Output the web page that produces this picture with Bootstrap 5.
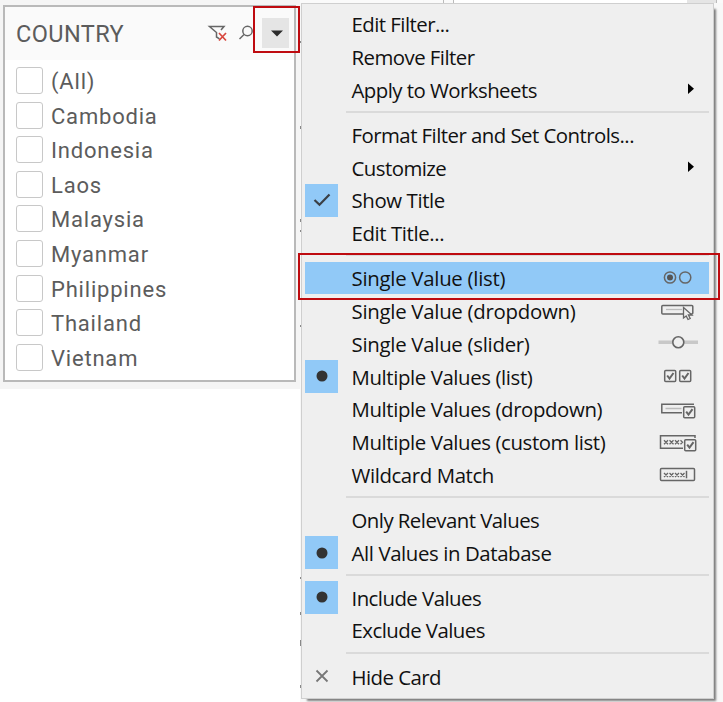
<!DOCTYPE html>
<html lang="en">
<head>
<meta charset="utf-8">
<title>Country filter</title>
<meta name="viewport" content="width=device-width, initial-scale=1">
<link href="https://cdn.jsdelivr.net/npm/bootstrap@5.3.0/dist/css/bootstrap.min.css" rel="stylesheet">
<style>
body{background:#fff;overflow:hidden}
.stage{width:723px;height:702px;background:linear-gradient(#f8f8f8,#f8f8f8) 300px 0/423px 702px no-repeat,#fff}
.side{width:300px;height:389px;background:#f5f5f5;padding:5px 0 0 3px}
.filter-card{width:293px;height:377px;border:2px solid #b9b9b9;border-radius:0;background:#fff;font-family:Roboto,sans-serif;color:#5c5c5c}
.filter-head{height:53px;background:#fafafa;padding-left:11px;font-size:23.5px;letter-spacing:.4px;flex:none}
.head-title{padding-top:2px}
.head-tools{width:84px;height:52px;margin-right:5px}
.filter-list{padding:7px 0 0 11px;font-size:22px}
.filter-row{height:34.6px;gap:8px;letter-spacing:.8px;line-height:29px}
.filter-row .form-check-input{width:27px;height:27px;margin:0;border:1.5px solid #c8c8c8;border-radius:3px;flex:none;background:#fff}
.edge{width:1px;height:702px;flex:none}
.ctx{display:block;position:static;width:413px;height:696px;margin-top:3px;padding:3.6px 4px 0 3px;border:1.5px solid #cfcfcf;border-radius:0;background:#efefef;box-shadow:4px 4px 2px -2px #7d7d7d;font-family:"Open Sans","Noto Sans",sans-serif}
.ctx .dropdown-item{height:32.8px;padding:0;font-size:20.4px;color:#111;line-height:33px;display:flex;align-items:stretch;background:none}
.ctx .dropdown-item.picked{background:#91c9f7}
.ctx .dropdown-item.last-item{padding-top:2px}
.mark-cell{width:33px;margin-right:13.5px;flex:none;display:flex;align-items:center;justify-content:center}
.mark-cell.on{background:#91c9f7}
.label{flex:1;letter-spacing:-.54px;padding-top:.6px;display:block}
.label.loose{letter-spacing:-.28px}
.label.relaxed{letter-spacing:-.4px}
.end-icon{width:52px;height:33px;flex:none}
.ctx .dropdown-divider{height:12.2px;margin:0 0 0 41px;border:0;opacity:1;background:linear-gradient(#dadada,#dadada) 0 5px/100% 2px no-repeat}
.callout{position:absolute;z-index:1100;border:2px solid #be0a0f;pointer-events:none}
.callout-arrow{left:253px;top:6px;width:47px;height:47px}
.callout-item{left:298px;top:253px;width:422px;height:47px}
.top-strip{position:absolute;left:300px;top:0;width:423px;height:3px}
svg{display:block}
</style>
</head>
<body>
<main class="stage position-relative d-flex align-items-start overflow-hidden">
  <svg class="top-strip" viewBox="0 0 423 3"><path fill="#fafafa" d="M0 0h423v3H0z"/><path fill="#fff" d="M154 0h233v3H154z"/><path fill="#e5e5e5" d="M387 0h29v3h-29z"/><path fill="#bbb" d="M143 0h1v3h-1zM153 0h1v3h-1zM416 0h1v3h-1z"/></svg>
  <aside class="side flex-shrink-0">
    <section class="card filter-card">
      <header class="filter-head d-flex align-items-center justify-content-between">
        <span class="head-title">COUNTRY</span>
        <svg class="head-tools" viewBox="205 7 84 52">
          <g fill="none" stroke="#666" stroke-width="1.5"><path d="M219.500 37.800l-3-1.800v-4.500l-7-6h14.500l-3 3.500"/><circle cx="247.500" cy="30" r="4.700"/><path d="M244 33.500l-4.500 4.500"/></g>
          <path d="M219 32l7 7.500m0-7.500l-7 7.500" stroke="#d8473e" stroke-width="1.700"/>
          <path fill="#fafafa" d="M253 10h9v40h-9z"/><path fill="#e5e5e5" d="M262 17h30v30h-30z"/><path fill="#2b2b2b" d="M271 29.500h12l-6 6z"/>
        </svg>
      </header>
      <div class="filter-list">
        <label class="filter-row d-flex"><input class="form-check-input" type="checkbox"><span>(All)</span></label>
        <label class="filter-row d-flex"><input class="form-check-input" type="checkbox"><span>Cambodia</span></label>
        <label class="filter-row d-flex"><input class="form-check-input" type="checkbox"><span>Indonesia</span></label>
        <label class="filter-row d-flex"><input class="form-check-input" type="checkbox"><span>Laos</span></label>
        <label class="filter-row d-flex"><input class="form-check-input" type="checkbox"><span>Malaysia</span></label>
        <label class="filter-row d-flex"><input class="form-check-input" type="checkbox"><span>Myanmar</span></label>
        <label class="filter-row d-flex"><input class="form-check-input" type="checkbox"><span>Philippines</span></label>
        <label class="filter-row d-flex"><input class="form-check-input" type="checkbox"><span>Thailand</span></label>
        <label class="filter-row d-flex"><input class="form-check-input" type="checkbox"><span>Vietnam</span></label>
      </div>
    </section>
  </aside>
  <svg class="edge" viewBox="0 0 1 702"><path fill="#888" d="M0 41h1v2H0zM0 126h1v3H0zM0 219h1v3H0zM0 230h1v2H0zM0 325h1v2H0zM0 577h1v2H0zM0 612h1v3H0zM0 640h1v6H0zM0 685h1v3H0z"/></svg>
  <div class="dropdown-menu show ctx flex-shrink-0">
    <a class="dropdown-item"><span class="mark-cell"></span><span class="label">Edit Filter...</span></a>
    <a class="dropdown-item"><span class="mark-cell"></span><span class="label">Remove Filter</span></a>
    <a class="dropdown-item"><span class="mark-cell"></span><span class="label">Apply to Worksheets</span><svg class="end-icon" viewBox="0 0 52 33"><path d="M31 10.500l6 5.200-6 5.200z"/></svg></a>
    <hr class="dropdown-divider">
    <a class="dropdown-item"><span class="mark-cell"></span><span class="label">Format Filter and Set Controls...</span></a>
    <a class="dropdown-item"><span class="mark-cell"></span><span class="label">Customize</span><svg class="end-icon" viewBox="0 0 52 33"><path d="M31 10.500l6 5.200-6 5.200z"/></svg></a>
    <a class="dropdown-item"><span class="mark-cell on"><svg width="20" height="16" viewBox="0 0 20 16"><path d="M2.500 8l5 4.800L17.500 2.500" fill="none" stroke="#3a3f45" stroke-width="2.200"/></svg></span><span class="label relaxed">Show Title</span></a>
    <a class="dropdown-item"><span class="mark-cell"></span><span class="label relaxed">Edit Title...</span></a>
    <hr class="dropdown-divider">
    <a class="dropdown-item picked"><span class="mark-cell"></span><span class="label loose">Single Value (list)</span><svg class="end-icon" viewBox="657 262 52 33"><g fill="none" stroke="#666" stroke-width="1.500"><circle cx="670" cy="277.500" r="5.600"/><circle cx="685.200" cy="277.500" r="5.600"/></g><circle cx="670" cy="277.500" r="3" fill="#555"/></svg></a>
    <a class="dropdown-item"><span class="mark-cell"></span><span class="label loose">Single Value (dropdown)</span><svg class="end-icon" viewBox="657 295 52 33"><rect x="661.800" y="306.500" width="31" height="8.500" rx="1" fill="none" stroke="#666" stroke-width="1.500"/><path d="M666 310.500h16" stroke="#bbb" stroke-width="1.300"/><path d="M683.500 308.500v10.500l2.700-2 1.800 3.500 2.200-1-1.800-3.500h3.600z" fill="#efefef" stroke="#666" stroke-width="1.300"/></svg></a>
    <a class="dropdown-item"><span class="mark-cell"></span><span class="label loose">Single Value (slider)</span><svg class="end-icon" viewBox="657 327.500 52 33"><path d="M658.500 342.800h39.500" stroke="#c8c8c8" stroke-width="3.500"/><circle cx="678.300" cy="342.800" r="5.500" fill="#efefef" stroke="#666" stroke-width="1.600"/></svg></a>
    <a class="dropdown-item"><span class="mark-cell on"><svg width="12" height="12"><circle cx="6" cy="6" r="5.500" fill="#333"/></svg></span><span class="label relaxed">Multiple Values (list)</span><svg class="end-icon" viewBox="657 360 52 33"><g fill="none" stroke="#666" stroke-width="1.500"><rect x="664.700" y="370.500" width="11" height="11" rx="1"/><rect x="679.700" y="370.500" width="11" height="11" rx="1"/><path stroke-width="2" d="M667.200 375.500l2.300 3 4-5.500M682.200 375.500l2.300 3 4-5.500"/></g></svg></a>
    <a class="dropdown-item"><span class="mark-cell"></span><span class="label relaxed">Multiple Values (dropdown)</span><svg class="end-icon" viewBox="657 393 52 33"><g fill="none" stroke="#666" stroke-width="1.500"><path d="M694 404.200h-32.200v8.500H682"/><path d="M665.500 408.500h16" stroke="#bbb"/><rect x="683.700" y="406.700" width="11" height="11" rx="1"/><path stroke-width="2" d="M686.200 411.700l2.300 3 4-5.500"/></g></svg></a>
    <a class="dropdown-item"><span class="mark-cell"></span><span class="label relaxed">Multiple Values (custom list)</span><svg class="end-icon" viewBox="657 426 52 33"><g fill="none" stroke="#666" stroke-width="1.500"><path d="M695 438v-2.200h-34.500v12.500H683"/><path stroke-width="1.300" d="M664 440.200l4 4m0-4l-4 4m5.500-4l4 4m0-4l-4 4m5.500-4l4 4m0-4l-4 4m5.500-4l2 2-2 2"/><rect x="684.700" y="439.700" width="11" height="11" rx="1"/><path stroke-width="2" d="M687.200 444.700l2.300 3 4-5.500"/></g></svg></a>
    <a class="dropdown-item"><span class="mark-cell"></span><span class="label relaxed">Wildcard Match</span><svg class="end-icon" viewBox="657 458.200 52 33"><g fill="none" stroke="#666" stroke-width="1.500"><rect x="660.500" y="468.700" width="34" height="12" rx="1"/><path stroke-width="1.300" d="M664 473.200l4 4m0-4l-4 4m5.500-4l4 4m0-4l-4 4m5.500-4l4 4m0-4l-4 4m5.500-4l4 4m0-4l-4 4"/><path d="M686.500 471v7.500"/></g></svg></a>
    <hr class="dropdown-divider">
    <a class="dropdown-item"><span class="mark-cell"></span><span class="label">Only Relevant Values</span></a>
    <a class="dropdown-item"><span class="mark-cell on"><svg width="12" height="12"><circle cx="6" cy="6" r="5.500" fill="#333"/></svg></span><span class="label relaxed">All Values in Database</span></a>
    <hr class="dropdown-divider">
    <a class="dropdown-item"><span class="mark-cell on"><svg width="12" height="12"><circle cx="6" cy="6" r="5.500" fill="#333"/></svg></span><span class="label">Include Values</span></a>
    <a class="dropdown-item"><span class="mark-cell"></span><span class="label">Exclude Values</span></a>
    <hr class="dropdown-divider">
    <a class="dropdown-item last-item"><span class="mark-cell"><svg width="14" height="14"><path d="M1.500 1.500l11 11m0-11l-11 11" stroke="#777" stroke-width="1.800"/></svg></span><span class="label">Hide Card</span></a>
  </div>
  <div class="callout callout-arrow"></div>
  <div class="callout callout-item"></div>
</main>
<script src="https://cdn.jsdelivr.net/npm/bootstrap@5.3.0/dist/js/bootstrap.bundle.min.js"></script>
</body>
</html>
